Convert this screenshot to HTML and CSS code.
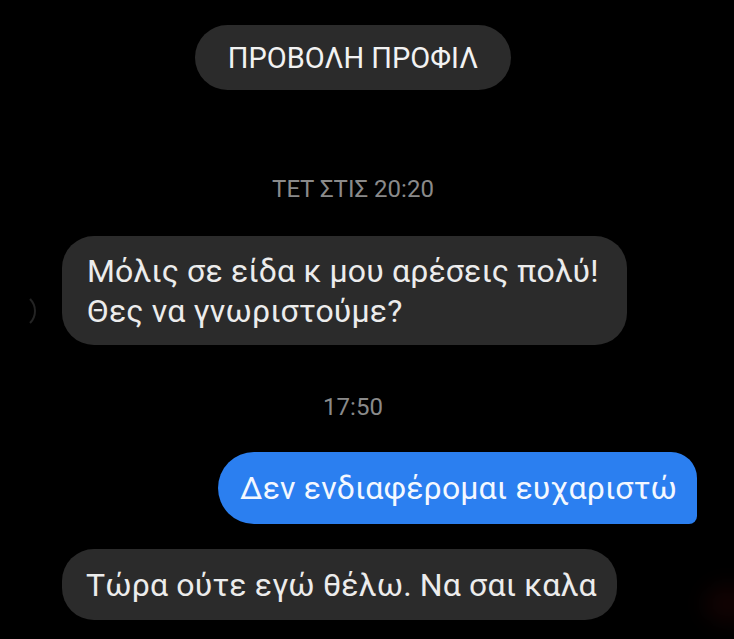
FILE: index.html
```html
<!DOCTYPE html>
<html lang="el">
<head>
  <meta charset="UTF-8" />
  <meta name="viewport" content="width=device-width, initial-scale=1.0"/>
  <title>Συνομιλία</title>
  <link rel="stylesheet" href="styles.css">
</head>
<body>

<div class="chat">
  <button class="profile-btn">ΠΡΟΒΟΛΗ ΠΡΟΦΙΛ</button>

  <div class="stamp stamp-first">ΤΕΤ ΣΤΙΣ 20:20</div>

  <div class="row row-first">
    <div class="avatar"></div>
    <div class="bubble in">Μόλις σε είδα κ μου αρέσεις πολύ!<br>Θες να γνωριστούμε?</div>
  </div>

  <div class="stamp stamp-second">17:50</div>

  <div class="row row-out">
    <div class="bubble out">Δεν ενδιαφέρομαι ευχαριστώ</div>
  </div>

  <div class="row row-last">
    <div class="avatar avatar-empty"></div>
    <div class="bubble in">Τώρα ούτε εγώ θέλω. Να σαι καλα</div>
  </div>
</div>

<div class="glow"></div>

</body>
</html>
```

FILE: styles.css
```css
* { box-sizing: border-box; margin: 0; padding: 0; }
html, body { background: #000; }
body { font-family: Roboto, "Noto Sans", Arial, sans-serif; width: 734px; height: 639px; overflow: hidden; position: relative; }

.chat { width: 706px; display: flex; flex-direction: column; }

.profile-btn {
  align-self: center; margin-top: 25px;
  width: 316px; height: 65px; border-radius: 33px;
  background: #2b2b2b; color: #f2f2f2; border: none;
  font-family: inherit; font-size: 29px;
}

.stamp { align-self: center; color: #8a8a8a; font-size: 24px; line-height: 28px; }
.stamp-first { margin-top: 85px; }
.stamp-second { margin-top: 48px; }

.row { display: flex; align-items: flex-end; }
.row-first { margin-top: 33px; }
.row-out { justify-content: flex-end; padding-right: 9px; margin-top: 31px; }
.row-last { margin-top: 25px; }

.avatar {
  width: 36px; height: 36px; margin: 40px 26px 0 0; border-radius: 50%;
  border: 2px solid transparent; border-right-color: #242424;
  align-self: center;
}
.avatar-empty { height: 0; margin-top: 0; border-color: transparent; }

.bubble {
  font-size: 32px; line-height: 40px; letter-spacing: 0.15px; color: #ececec;
  padding: 14.5px 28px 14.5px 25px; border-radius: 32px;
}
.row-last .bubble { padding: 15.5px 20px 15.5px 24px; }
.bubble.in { background: #2b2b2b; }
.bubble.out {
  background: #2b7ff0; color: #f4f8ff;
  padding: 16px 20px 16px 22px;
  border-radius: 36px 26px 8px 36px;
}

.glow {
  position: absolute; right: -20px; bottom: 15px; width: 50px; height: 40px;
  border-radius: 50%; background: rgba(90, 10, 10, 0.18); filter: blur(10px);
}
```
